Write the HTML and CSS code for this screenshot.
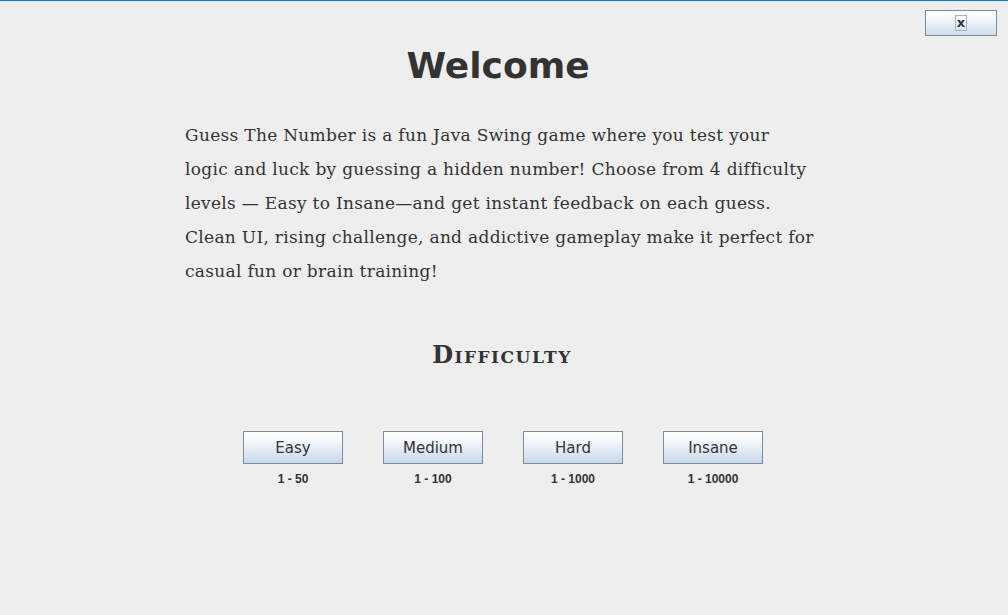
FILE: index.html
```html
<!DOCTYPE html>
<html>
<head>
<meta charset="utf-8">
<link rel="stylesheet" href="styles.css">
</head>
<body>
<div class="window">
  <div class="topbar">
    <button class="close"><span class="close-label">x</span></button>
  </div>
  <h1 class="title">Welcome</h1>
  <p class="intro">Guess The Number is a fun Java Swing game where you test your<br>logic and luck by guessing a hidden number! Choose from 4 difficulty<br>levels — Easy to Insane—and get instant feedback on each guess.<br>Clean UI, rising challenge, and addictive gameplay make it perfect for<br>casual fun or brain training!</p>
  <h2 class="subtitle">Difficulty</h2>
  <div class="levels">
    <div class="level"><button class="btn">Easy</button><span class="range">1 - 50</span></div>
    <div class="level"><button class="btn">Medium</button><span class="range">1 - 100</span></div>
    <div class="level"><button class="btn">Hard</button><span class="range">1 - 1000</span></div>
    <div class="level"><button class="btn">Insane</button><span class="range">1 - 10000</span></div>
  </div>
</div>
</body>
</html>
```
FILE: styles.css
```css
html, body {
  margin: 0;
  padding: 0;
  background: #eeeeee;
}
.window {
  width: 1008px;
  height: 615px;
  border-top: 1px solid #1a78c8;
  box-sizing: border-box;
  display: flex;
  flex-direction: column;
  align-items: center;
  color: #333333;
}
.topbar {
  align-self: stretch;
  display: flex;
  justify-content: flex-end;
  padding: 9px 11px 0 0;
  height: 26px;
}
.close {
  width: 72px;
  height: 26px;
  border: 1px solid #7a8a99;
  background: linear-gradient(#ffffff 0%, #f3f7fb 35%, #cddcec 100%);
  padding: 0;
  display: flex;
  align-items: center;
  justify-content: center;
  font-family: "DejaVu Sans", sans-serif;
  font-size: 13px;
  font-weight: bold;
  color: #333;
}
.close-label {
  border: 1px solid #9fb4cc;
  padding: 0 1px;
  line-height: 14px;
}
.title {
  margin: 8px 0 0 0;
  font-family: "DejaVu Sans", sans-serif;
  font-weight: bold;
  font-size: 36px;
  line-height: 44px;
  color: #333;
  transform: translateX(-6px);
}
.intro {
  width: 640px;
  margin: 30px 0 0 0;
  padding-left: 0;
  transform: translateX(1px);
  white-space: nowrap;
  font-family: "DejaVu Serif", serif;
  font-size: 17px;
  letter-spacing: 0.3px;
  line-height: 34px;
  color: #333;
}
.subtitle {
  margin: 52px 0 0 0;
  font-family: "DejaVu Serif", serif;
  font-variant: small-caps;
  font-weight: bold;
  font-size: 24px;
  letter-spacing: 1.5px;
  line-height: 30px;
  color: #333;
  transform: translateX(-2px);
}
.levels {
  display: flex;
  gap: 40px;
  margin-top: 61px;
  transform: translateX(-1px);
}
.level {
  display: flex;
  flex-direction: column;
  align-items: center;
  gap: 7px;
}
.btn {
  width: 100px;
  height: 33px;
  border: 1px solid #7a8a99;
  background: linear-gradient(#ffffff 0%, #f3f7fb 30%, #c8d8ea 100%);
  font-family: "DejaVu Sans", sans-serif;
  font-size: 15px;
  color: #333;
  padding: 0;
}
.range {
  font-family: "Liberation Sans", Arial, sans-serif;
  font-weight: bold;
  font-size: 12px;
  line-height: 16px;
  color: #333;
}
```
